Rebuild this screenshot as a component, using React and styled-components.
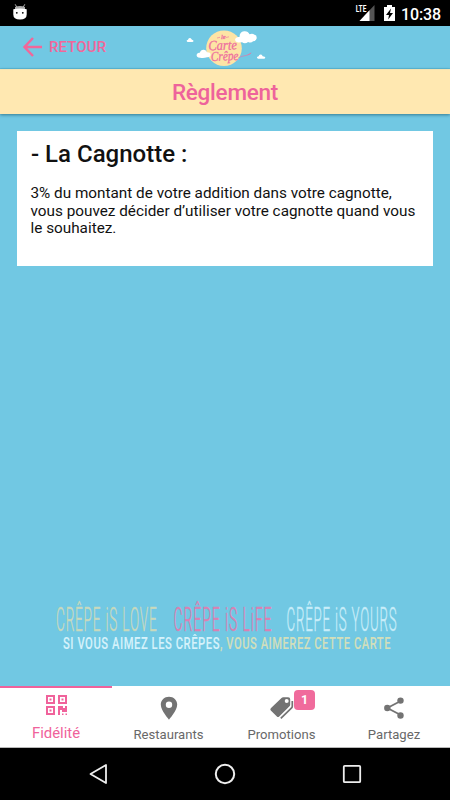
import React from "react";
import styled, { createGlobalStyle } from "styled-components";

const Global = createGlobalStyle`
  * { box-sizing: border-box; }
  body { margin: 0; background: #000; font-family: Roboto, "Open Sans", sans-serif; }
  svg { display: block; flex: none; overflow: visible; }
`;

const Screen = styled.div`
  width: 450px;
  height: 800px;
  display: flex;
  flex-direction: column;
  overflow: hidden;
  background: #71c8e3;
`;

const StatusBar = styled.div`
  height: 26px;
  flex: none;
  background: #000;
  color: #fff;
  display: flex;
  align-items: flex-start;
  justify-content: space-between;
  padding: 0 9px 0 12px;
`;

const StatusGroup = styled.div`
  display: flex;
  align-items: flex-start;
`;

const Clock = styled.span`
  font-size: 16px;
  font-weight: 500;
  line-height: 19px;
  margin: 5px 0 0 6px;
  width: 40px;
  white-space: nowrap;
  letter-spacing: -0.1px;
`;

const Header = styled.header`
  height: 43px;
  flex: none;
  display: grid;
  grid-template-columns: 186px 80px 1fr;
  border-bottom: 1px solid #5fbddb;
`;

const BackButton = styled.button`
  border: 0;
  padding: 0 0 0 22px;
  background: none;
  display: flex;
  align-items: center;
  gap: 6px;
  color: #f1679a;
  font: 500 15px/20px Roboto, sans-serif;
  letter-spacing: 0.1px;
`;

const TitleBar = styled.div`
  height: 45px;
  flex: none;
  display: flex;
  justify-content: center;
  padding-top: 8px;
  background: #ffe8b1;
  color: #ee639b;
  font-size: 22.5px;
  font-weight: 500;
  line-height: 28px;
  letter-spacing: -0.25px;
  border-top: 1px solid #f3e4b5;
  box-shadow: 0 1px 3px rgba(0, 60, 80, 0.55);
`;

const Content = styled.main`
  flex: 1;
  display: flex;
  flex-direction: column;
  justify-content: space-between;
  padding: 17px 17px 32px;
`;

const Card = styled.article`
  height: 135px;
  background: #fff;
  color: #111;
  padding: 9px 13px;
`;

const CardTitle = styled.h2`
  margin: 0 0 16px;
  padding-left: 1px;
  font-size: 24px;
  font-weight: 500;
  line-height: 29px;
`;

const CardText = styled.p`
  margin: 0;
  font-size: 15.3px;
  line-height: 17.5px;
  white-space: nowrap;
  padding-left: 0.5px;
`;

const Slogan = styled.div`
  padding-left: 33px;
`;

const Tabs = styled.nav`
  height: 62px;
  flex: none;
  display: grid;
  grid-template-columns: 112px 113px 113px 112px;
  background: #fff;
  border-bottom: 1px solid #b8b8b8;
`;

const Tab = styled.div`
  position: relative;
  display: flex;
  flex-direction: column;
  align-items: center;
  border-top: 2px solid ${(p) => (p.$active ? "#f0629b" : "#fff")};
  color: ${(p) => (p.$active ? "#f0629b" : "#737373")};
`;

const TabIcon = styled.div`
  height: ${(p) => (p.$active ? 36 : 37)}px;
  padding-top: ${(p) => (p.$active ? 7 : 8)}px;
`;

const TabLabel = styled.span`
  font-size: ${(p) => (p.$active ? 14.9 : 13.1)}px;
  line-height: 19px;
  color: ${(p) => (p.$active ? "#f0629b" : "#686868")};
  white-space: nowrap;
`;

const Badge = styled.span`
  position: absolute;
  left: 69px;
  top: 2px;
  width: 21px;
  height: 20px;
  border-radius: 4px;
  background: #f06b9c;
  color: #fff;
  font-size: 12.5px;
  font-weight: 700;
  line-height: 20px;
  text-align: center;
`;

const SystemNav = styled.div`
  height: 52px;
  flex: none;
  background: #000;
  display: flex;
  justify-content: space-between;
  align-items: center;
  padding: 0 88px;
`;

function Mascot() {
  return (
    <svg width="16" height="22" viewBox="0 0 16 22">
      <path d="M3.2 4.3 5 7.5M12.8 4.3 11 7.5" stroke="#ddd" strokeWidth=".8" />
      <path d="M3 7q5-2 10 0v2H3z" fill="#aaa" />
      <path d="M1.3 9.2q6.7-1.5 13.4 0v5.3q0 5-6.7 5t-6.7-5z" fill="#fff" />
      <circle cx="4.8" cy="12.8" r=".9" />
      <circle cx="10.8" cy="12.8" r=".9" />
    </svg>
  );
}

function Signal() {
  return (
    <svg width="20" height="24" viewBox="0 0 20 24">
      <path d="M19.500 5v16H4.500z" fill="#555" />
      <path d="M14.500 10.300V21H4.500z" fill="#fff" />
      <path d="M0 3h12v9.500H0z" />
      <text x=".8" y="12" textLength="10.500" lengthAdjust="spacingAndGlyphs" fill="#fff" fontSize="9" fontWeight="700">LTE</text>
    </svg>
  );
}

function Battery() {
  return (
    <svg width="11" height="24" viewBox="0 0 11 24">
      <path d="M0 7h3V5h5v2h3v14H0z" fill="#fff" />
      <path d="M7 8.5 2 15h3l-.8 4.5L9 13H6z" />
    </svg>
  );
}

function Logo() {
  return (
    <svg width="80" height="42" viewBox="186 26 80 42">
      <circle cx="224" cy="48.2" r="17.8" fill="#fde4a5" />
      <path d="M238 42.5q-4-1-2.5-4 1-2 4-1.500 0-5 4.500-5.700 4-.5 5.500 3 3-1.500 5 .5 2.500.3 2.200 3.500-.5 3-3.600 3-2 2-5 .7-3 2.300-6 .3z" fill="#fff" />
      <path d="M200 57.800q-4-.2-3.300-3.200.8-2.300 3.100-1.800 1-3.500 4.200-3.100 2.200.3 3 2.600 3.500-.2 3.600 2.300-.1 3-3.500 2.700-3.500 1.300-7.100.5z" fill="#fff" />
      <path d="M187.500 42q-2-1.500.5-2.200.5-2.300 2.800-1.500l1.200 1.500q2.800 1 .5 2.200zM258 58.700q-2.500-1.800.7-2.500.5-2.500 3-1.500l1 1.500q4.200.8 1.700 2.500z" fill="#fff" />
      <g fill="#ee6d9f" stroke="#ee6d9f" strokeWidth=".3" fontFamily='"Liberation Serif", serif' fontStyle="italic">
        <text x="221" y="38.500" fontSize="6.500">le</text>
        <text x="208.500" y="49.800" fontSize="14" textLength="28.500" lengthAdjust="spacingAndGlyphs" transform="rotate(-2 224 50)">Carte</text>
        <text x="211" y="60.500" fontSize="13.500" textLength="27.500" lengthAdjust="spacingAndGlyphs" transform="rotate(-2 224 60)">Crêpe</text>
      </g>
      <path d="M238 58q4-2 7-2.300t5-2q2-1.500.5-.2t-3 1.200M226 37.500l3-.7M217 38l3-.7" fill="none" stroke="#ee6d9f" strokeWidth=".6" />
    </svg>
  );
}

const phrases = [
  { x: 6, width: 101.5, text: "CRÊPE iS LOVE", color: "#c8d9bd" },
  { x: 123.5, width: 99, text: "CRÊPE iS LiFE", color: "#d981b2" },
  { x: 236.5, width: 111, text: "CRÊPE iS YOURS", color: "#c8edf9" },
];

const taglines = [
  { x: 13, width: 157, text: "SI VOUS AIMEZ LES CRÊPES", color: "#d5f2fb" },
  { x: 170, width: 171, text: ", VOUS AIMEREZ CETTE CARTE", color: "#d2dfbb" },
];

function NarrowText({ line, y, scale, ...rest }) {
  return (
    <text
      transform={`translate(${line.x} ${y}) scale(${scale} 1)`}
      textLength={line.width / scale}
      lengthAdjust="spacingAndGlyphs"
      fill={line.color}
      stroke={line.color}
      {...rest}
    >
      {line.text}
    </text>
  );
}

function SloganArt() {
  return (
    <svg width="356" height="54" viewBox="0 0 356 54">
      {phrases.map((line) => (
        <NarrowText key={line.x} line={line} y={31} scale={0.4} fontSize="33" fontWeight="300" letterSpacing="2" strokeWidth=".4" />
      ))}
      {taglines.map((line) => (
        <NarrowText key={line.x} line={line} y={48.5} scale={0.68} fontSize="16.500" fontWeight="500" letterSpacing=".800" strokeWidth=".1" />
      ))}
    </svg>
  );
}

function QrIcon() {
  return (
    <svg width="20" height="22" viewBox="0 0 20 22" fill="currentColor">
      <path fillRule="evenodd" d="M0 0h9v9H0zM2 2v5h5V2zM12 0h9v9h-9zM14 2v5h5V2zM0 11h9v9H0zM2 13v5h5v-5z" />
      <path d="M3.500 3.500h2v2h-2zM15.500 3.500h2v2h-2zM3.500 14.500h2v2h-2zM12 11h5v2h2v-2h2v6h-5v-2h-2v5h-2zM16 18.500h1.500V20H16zM19.500 18.500H21V20h-1.500z" />
    </svg>
  );
}

function PinIcon() {
  return (
    <svg width="18" height="24" viewBox="0 0 18 24">
      <path fill="currentColor" fillRule="evenodd" d="M9 .7C4.400.7.800 4 .800 8.600.800 14.700 9 23.700 9 23.700s8.200-9 8.200-15.100C17.200 4 13.600.7 9 .7zm0 4.900a3.200 3.200 0 1 1 0 6.400 3.200 3.200 0 0 1 0-6.400z" />
    </svg>
  );
}

function TagsIcon() {
  return (
    <svg width="24" height="24" viewBox="0 0 24 24">
      <path fill="currentColor" fillRule="evenodd" d="M.8 12.200 11.500 2q.7-.7 1.700-.7h5q2 0 2 2v5.200q0 1-.7 1.700L9.200 20.600q-1.200 1-2.300 0L.8 14.500q-1-1.100 0-2.300zM16.700 3a2 2 0 1 0 0 4 2 2 0 0 0 0-4z" />
      <path d="M22.300 5v5.200q0 .9-.7 1.600L10.800 22.300" fill="none" stroke="currentColor" strokeWidth="1.700" />
    </svg>
  );
}

function ShareIcon() {
  return (
    <svg width="22" height="24" viewBox="0 0 22 24">
      <path d="M17.700 5 4.300 12l13.400 7" fill="none" stroke="currentColor" strokeWidth="1.800" />
      <g fill="currentColor">
        <circle cx="17.500" cy="4.600" r="3.200" />
        <circle cx="4.300" cy="12" r="3.200" />
        <circle cx="17.500" cy="19.500" r="3.200" />
      </g>
    </svg>
  );
}

const tabs = [
  { label: "Fidélité", Icon: QrIcon, active: true },
  { label: "Restaurants", Icon: PinIcon },
  { label: "Promotions", Icon: TagsIcon, badge: 1 },
  { label: "Partagez", Icon: ShareIcon },
];

export default function App() {
  return (
    <>
      <Global />
      <Screen>
        <StatusBar>
          <Mascot />
          <StatusGroup>
            <Signal />
            <svg width="9" height="1" />
            <Battery />
            <Clock>10:38</Clock>
          </StatusGroup>
        </StatusBar>
        <Header>
          <BackButton>
            <svg width="21" height="20" viewBox="0 0 21 20" fill="none" stroke="currentColor" strokeWidth="2.500">
              <path d="M11 1 2.500 10l8.500 9M2.500 10H20" />
            </svg>
            RETOUR
          </BackButton>
          <Logo />
        </Header>
        <TitleBar>Règlement</TitleBar>
        <Content>
          <Card>
            <CardTitle>- La Cagnotte :</CardTitle>
            <CardText>
              3% du montant de votre addition dans votre cagnotte,<br />
              vous pouvez décider d’utiliser votre cagnotte quand vous<br />
              le souhaitez.
            </CardText>
          </Card>
          <Slogan><SloganArt /></Slogan>
        </Content>
        <Tabs>
          {tabs.map(({ label, Icon, active, badge }) => (
            <Tab key={label} $active={active}>
              <TabIcon $active={active}><Icon /></TabIcon>
              <TabLabel $active={active}>{label}</TabLabel>
              {badge && <Badge>{badge}</Badge>}
            </Tab>
          ))}
        </Tabs>
        <SystemNav>
          <svg width="20" height="22" viewBox="0 0 20 22" fill="none" stroke="#eee" strokeWidth="1.800">
            <path d="M18 2v18L2.500 11z" strokeLinejoin="round" />
          </svg>
          <svg width="22" height="22" viewBox="0 0 22 22" fill="none" stroke="#eee" strokeWidth="2">
            <circle cx="11" cy="11" r="9.200" />
          </svg>
          <svg width="20" height="20" viewBox="0 0 20 20" fill="none" stroke="#eee" strokeWidth="1.800">
            <rect x="1.800" y="1.800" width="16.400" height="16.400" rx="1" />
          </svg>
        </SystemNav>
      </Screen>
    </>
  );
}
